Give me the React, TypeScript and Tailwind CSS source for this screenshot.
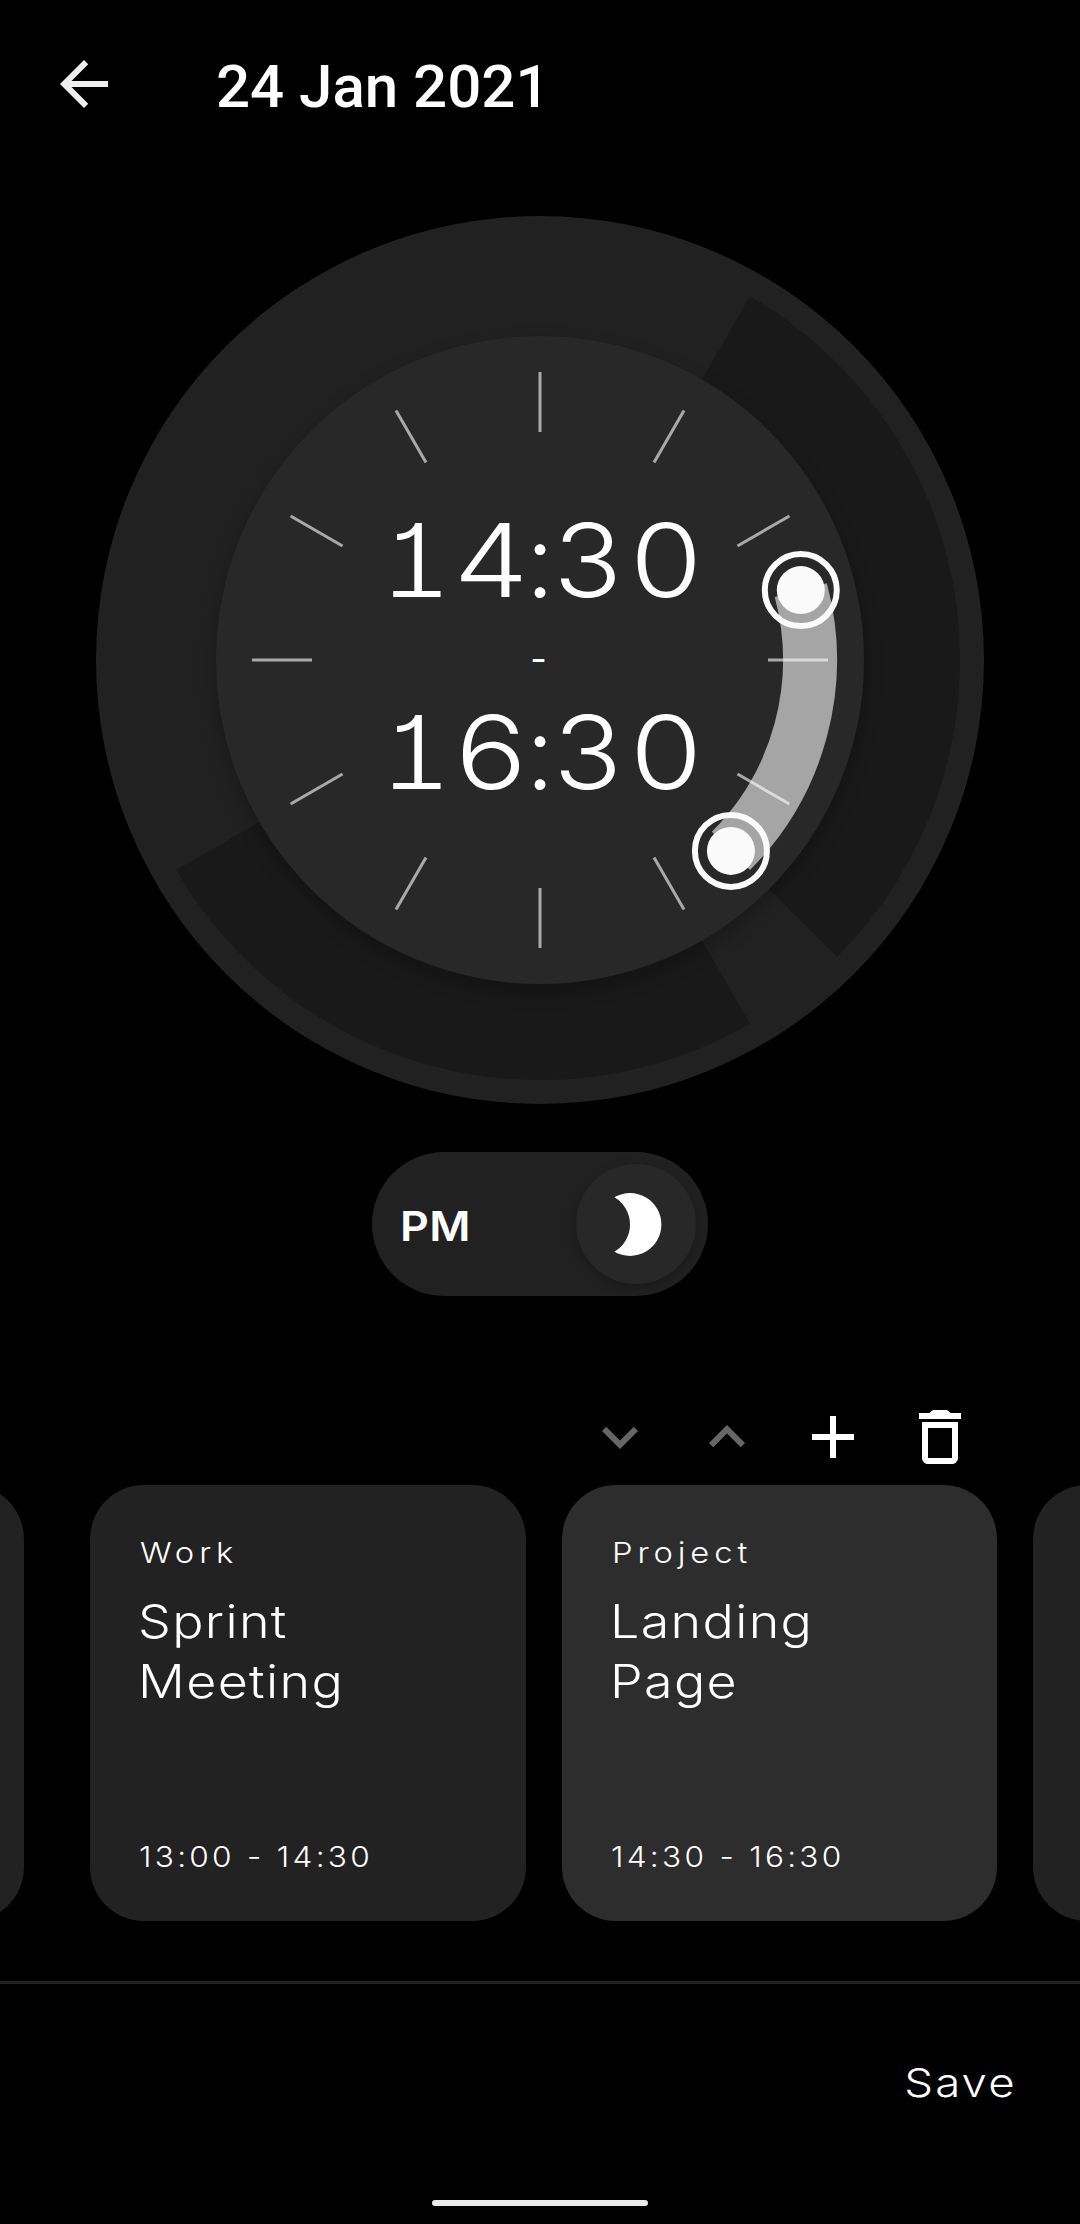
const C = 444;

function point(radius: number, degrees: number) {
  const a = (degrees * Math.PI) / 180;
  return `${(C + radius * Math.sin(a)).toFixed(2)} ${(C - radius * Math.cos(a)).toFixed(2)}`;
}

function sector(radius: number, from: number, to: number) {
  return `M${C} ${C}L${point(radius, from)}A${radius} ${radius} 0 0 1 ${point(radius, to)}Z`;
}

function arc(radius: number, from: number, to: number) {
  return `M${point(radius, from)}A${radius} ${radius} 0 0 1 ${point(radius, to)}`;
}

const HOURS = [0, 30, 60, 90, 120, 150, 180, 210, 240, 270, 300, 330];

function Handle({ x, y }: { x: number; y: number }) {
  return (
    <g>
      <circle cx={x} cy={y} r="36" fill="none" stroke="#fafafa" strokeWidth="6" />
      <circle cx={x} cy={y} r="24" fill="#fafafa" />
    </g>
  );
}

function BigTime({ digits }: { digits: [string, string, string, string] }) {
  const [a, b, c, d] = digits;
  return (
    <div className="ml-1 flex h-[120px] w-[320px] text-center text-[102px] leading-[120px] font-[350] [font-feature-settings:'cv01','tnum','calt'_0]">
      <span className="w-[68px] scale-x-[1.07]">{a}</span>
      <span className="w-[82px] scale-x-[1.16]">{b}</span>
      <span className="w-[16px]">
        <span className="-mx-6">:</span>
      </span>
      <span className="w-[82px] scale-x-[1.11]">{c}</span>
      <span className="w-[72px] scale-x-[1.14]">{d}</span>
    </div>
  );
}

function Clock() {
  return (
    <div className="mx-auto grid size-[888px] place-items-center rounded-full bg-[#212121]">
      <svg viewBox="0 0 888 888" className="size-[888px] [grid-area:1/1]">
        <path d={sector(420, 30, 135)} fill="#191919" />
        <path d={sector(420, 150, 240)} fill="#191919" />
      </svg>
      <div className="size-[648px] rounded-full bg-[#282828] shadow-[0_8px_18px_rgba(0,0,0,0.25)] [grid-area:1/1]" />
      <svg viewBox="0 0 888 888" className="size-[888px] [grid-area:1/1]">
        <path d={arc(270, 75, 135)} fill="none" stroke="#fff" strokeOpacity="0.585" strokeWidth="54" />
        {HOURS.map((h) => (
          <path key={h} d={`M${point(288, h)}L${point(228, h)}`} stroke="#fff" strokeOpacity="0.6" strokeWidth="3" />
        ))}
        <Handle x={704.8} y={374.1} />
        <Handle x={634.9} y={634.9} />
      </svg>
      <div className="flex flex-col items-center pb-[9px] [grid-area:1/1]">
        <BigTime digits={["1", "4", "3", "0"]} />
        <div className="mr-[3px] h-[72px] text-[36px] leading-[78px] font-normal">-</div>
        <BigTime digits={["1", "6", "3", "0"]} />
      </div>
    </div>
  );
}

function Card({ kind, title, time, active }: { kind?: string; title?: string[]; time?: string; active?: boolean }) {
  return (
    <article
      className={`flex h-[436px] w-[435.7px] shrink-0 flex-col rounded-[54px] pt-[50px] pb-[46px] pl-[50px] ${active ? "bg-[#2d2d2d]" : "bg-[#222222]"}`}
    >
      <div className="origin-left scale-x-[1.13] text-[29px] leading-9 tracking-[4.3px]">{kind}</div>
      <h2 className="mt-[20px] -ml-[2px] origin-left scale-x-[1.13] text-[46px] leading-[60px] tracking-[1.2px]">
        {title?.map((line) => <span key={line} className="block">{line}</span>)}
      </h2>
      <div className="mt-auto -ml-px origin-left scale-x-[1.09] text-[29px] leading-9 tracking-[3px]">{time}</div>
    </article>
  );
}

function Icon({ d, color }: { d: string; color: string }) {
  return (
    <svg viewBox="0 0 24 24" className={`size-[72px] ${color}`} fill="currentColor">
      <path d={d} />
    </svg>
  );
}

export default function App() {
  return (
    <div className="flex h-[2224px] w-[1080px] flex-col overflow-hidden bg-black font-['Inter',sans-serif] font-[340] text-white">
      <header className="flex h-[216px] items-start pt-12 pl-12">
        <Icon color="text-[#eeeeee]" d="M20 11H7.83l5.59-5.59L12 4l-8 8 8 8 1.41-1.41L7.83 13H20v-2z" />
        <h1 className="ml-[96px] pt-[3px] font-['Roboto',sans-serif] text-[60px] leading-[72px] font-medium">24 Jan 2021</h1>
      </header>

      <Clock />

      <div className="mx-auto mt-12 flex h-36 w-[336px] items-center justify-between rounded-full bg-[#212121] pr-3 pl-[28px]">
        <span className="origin-left scale-x-[1.09] pt-1 text-[41px] leading-[48px] font-semibold tracking-[0.5px]">PM</span>
        <div className="size-[120px] rounded-full bg-[#282828] shadow-[0_4px_12px_rgba(0,0,0,0.25)]">
          <svg viewBox="0 0 120 120" className="size-[120px]">
            <path d="M38.3 33.3A31.4 31.4 0 1 1 38.3 87.7A31.4 31.4 0 0 0 38.3 33.3Z" fill="#fff" />
          </svg>
        </div>
      </div>

      <div className="mt-[105px] flex h-[84px] gap-[34.4px] pl-[584.4px]">
        <Icon color="text-[#666666]" d="M7.41 8.59 12 13.17l4.59-4.58L18 10l-6 6-6-6 1.41-1.41z" />
        <Icon color="text-[#666666]" d="M12 8l-6 6 1.41 1.41L12 10.83l4.59 4.58L18 14z" />
        <Icon color="text-white" d="M19 13h-6v6h-2v-6H5v-2h6V5h2v6h6v2z" />
        <Icon
          color="text-white"
          d="M6 19c0 1.1.9 2 2 2h8c1.1 0 2-.9 2-2V7H6v12zM8 9h8v10H8V9zM15.5 4l-.7-.7Q14.5 3 14 3h-4Q9.5 3 9.2 3.3L8.5 4H5v2h14V4z"
        />
      </div>

      <div className="flex pl-[90px]">
        <div className="-ml-[502px] mr-[66.3px]"><Card /></div>
        <div className="flex gap-9">
          <Card kind="Work" title={["Sprint", "Meeting"]} time="13:00 - 14:30" />
          <Card kind="Project" title={["Landing", "Page"]} time="14:30 - 16:30" active />
          <Card />
        </div>
      </div>

      <footer className="mt-[60px] flex grow flex-col border-t-[3px] border-[#222222]">
        <div className="flex justify-end pt-[75px] pr-[63px]">
          <button className="origin-right scale-x-[1.14] text-[40px] leading-[48px] tracking-[1.9px]">Save</button>
        </div>
        <div className="mx-auto mt-auto mb-[18px] h-1.5 w-[216px] rounded-full bg-[#ebebeb]" />
      </footer>
    </div>
  );
}
